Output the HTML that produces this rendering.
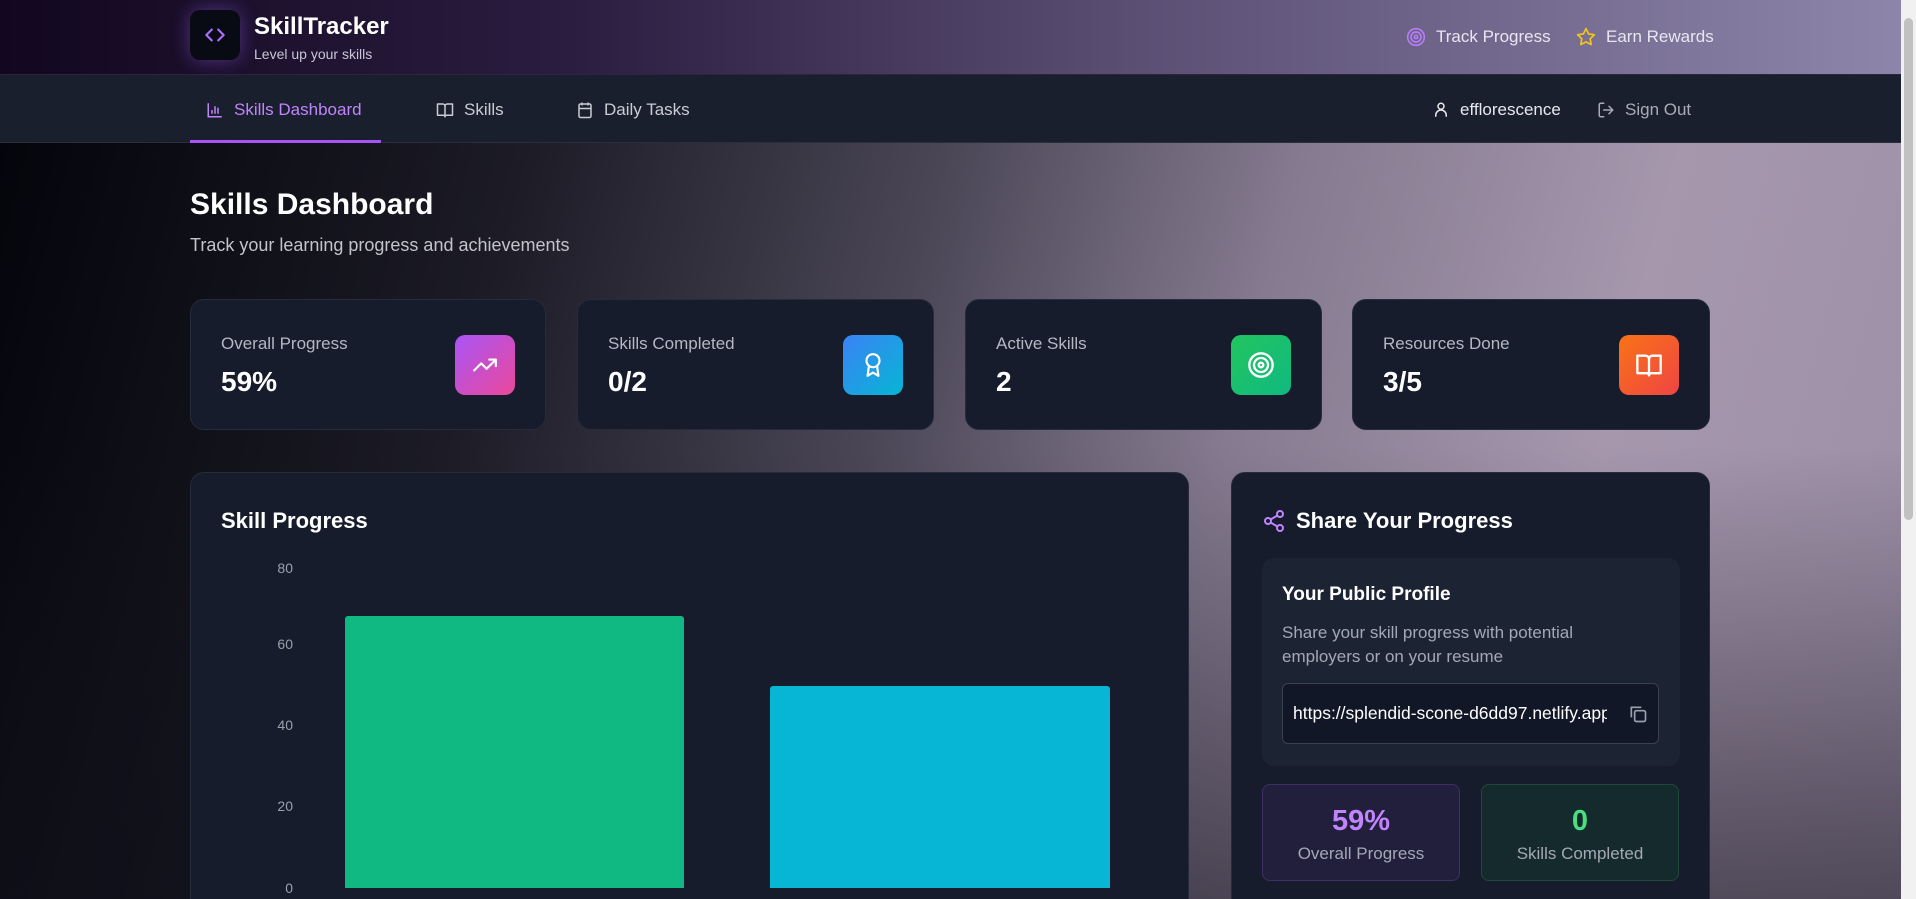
<!DOCTYPE html>
<html style="overflow:hidden;width:1916px;height:899px"><head><meta charset="utf-8"><style>
*{box-sizing:border-box;margin:0;padding:0}
body{width:1916px;height:899px;overflow:hidden;font-family:"Liberation Sans",sans-serif;color:#fff;position:relative;background:#0a0b12}
.bg{position:absolute;left:0;top:143px;width:1901px;height:756px;
background:linear-gradient(180deg,rgba(0,0,0,0) 0%,rgba(0,0,0,0) 40%,rgba(15,15,25,.55) 100%),linear-gradient(105deg,#04050b 0%,#1c1b26 25%,#4a4656 45%,#857a8f 62%,#a697ad 80%,#9c8fa6 100%)}
.hdr{position:absolute;left:0;top:0;width:1901px;height:75px;background:linear-gradient(90deg,#12071f 0%,#2a1d40 30%,#5b4f74 60%,#8d85aa 100%);border-bottom:1px solid #2b2540}
.nav{position:absolute;left:0;top:75px;width:1901px;height:68px;background:#1a1f2d;border-bottom:1px solid #2a2f3c}
.logo{position:absolute;left:190px;top:10px;width:50px;height:50px;border-radius:10px;background:#080a14;box-shadow:0 0 18px rgba(150,90,240,.45);display:flex;align-items:center;justify-content:center}
.abs{position:absolute}
.ni{position:absolute;top:100px;font-size:17px;color:#c9ccd4;display:flex;align-items:center;gap:10px;white-space:nowrap}
.card{position:absolute;background:#161c2b;border:1px solid #262c3b;border-radius:14px}
.lbl{position:absolute;left:30px;top:34px;font-size:17px;color:#b4b8c2}
.val{position:absolute;left:30px;top:66px;font-size:28px;font-weight:bold}
.ib{position:absolute;right:30px;top:35px;width:60px;height:60px;border-radius:10px;display:flex;align-items:center;justify-content:center}
.ax{position:absolute;font-size:14px;color:#9aa0ab;width:40px;text-align:right}
.scroll{position:absolute;right:0;top:0;width:15px;height:899px;background:#f1f1f1}
</style></head><body>
<div class="hdr"></div>
<div class="bg"></div>
<div class="nav"></div>
<div class="logo"><svg width="26" height="26" viewBox="0 0 24 24" fill="none" stroke="#a970f5" stroke-width="2" stroke-linecap="round" stroke-linejoin="round"><path d="M9 7l-5 5 5 5M15 7l5 5-5 5"/></svg></div>
<div class="abs" style="left:254px;top:13px;font-size:24px;font-weight:bold">SkillTracker</div>
<div class="abs" style="left:254px;top:46px;font-size:14px;color:#c8c6d6">Level up your skills</div>
<div class="abs" style="left:1406px;top:27px;font-size:17px;color:#e8e6f0;display:flex;align-items:center;gap:10px"><svg width="20" height="20" viewBox="0 0 24 24" fill="none" stroke="#b67cf7" stroke-width="2"><circle cx="12" cy="12" r="10"/><circle cx="12" cy="12" r="6"/><circle cx="12" cy="12" r="2"/></svg>Track Progress</div>
<div class="abs" style="left:1576px;top:27px;font-size:17px;color:#e8e6f0;display:flex;align-items:center;gap:10px"><svg width="20" height="20" viewBox="0 0 24 24" fill="none" stroke="#f5c518" stroke-width="2" stroke-linejoin="round"><path d="M12 2l3.1 6.3 6.9 1-5 4.9 1.2 6.8L12 17.8 5.8 21l1.2-6.8-5-4.9 6.9-1z"/></svg>Earn Rewards</div>

<div class="ni" style="left:206px;color:#c084fc"><svg width="18" height="18" viewBox="0 0 24 24" fill="none" stroke="#c084fc" stroke-width="2"><path d="M3 3v18h18M8 17v-5M12 17V7M16 17v-8"/></svg>Skills Dashboard</div>
<div class="abs" style="left:190px;top:140px;width:191px;height:3px;background:#a855f7"></div>
<div class="ni" style="left:436px"><svg width="18" height="18" viewBox="0 0 24 24" fill="none" stroke="#c9ccd4" stroke-width="2" stroke-linejoin="round"><path d="M2 4h7a3 3 0 0 1 3 3v14a2 2 0 0 0-2-2H2zM22 4h-7a3 3 0 0 0-3 3v14a2 2 0 0 1 2-2h8z"/></svg>Skills</div>
<div class="ni" style="left:576px"><svg width="18" height="18" viewBox="0 0 24 24" fill="none" stroke="#c9ccd4" stroke-width="2"><rect x="4" y="4" width="16" height="18" rx="2"/><path d="M8 2v4M16 2v4M4 10h16"/></svg>Daily Tasks</div>
<div class="ni" style="left:1432px;color:#e6e8ee"><svg width="18" height="18" viewBox="0 0 24 24" fill="none" stroke="#e6e8ee" stroke-width="2"><circle cx="12" cy="7" r="4"/><path d="M5 21v-2a7 7 0 0 1 14 0v2"/></svg>efflorescence</div>
<div class="ni" style="left:1597px;color:#a8acb6"><svg width="18" height="18" viewBox="0 0 24 24" fill="none" stroke="#a8acb6" stroke-width="2" stroke-linecap="round"><path d="M9 21H5a2 2 0 0 1-2-2V5a2 2 0 0 1 2-2h4M16 17l5-5-5-5M21 12H9"/></svg>Sign Out</div>

<div class="abs" style="left:190px;top:188px;font-size:30px;font-weight:bold">Skills Dashboard</div>
<div class="abs" style="left:190px;top:235px;font-size:18px;color:#c3c3cc">Track your learning progress and achievements</div>

<div class="card" style="left:190px;top:299px;width:356px;height:131px"><div class="lbl">Overall Progress</div><div class="val">59%</div><div class="ib" style="background:linear-gradient(135deg,#a855f7,#ec4899)"><svg width="26" height="26" viewBox="0 0 24 24" fill="none" stroke="#fff" stroke-width="2" stroke-linecap="round" stroke-linejoin="round"><path d="M22 7l-8.5 8.5-5-5L2 17M16 7h6v6"/></svg></div></div>
<div class="card" style="left:577px;top:299px;width:357px;height:131px"><div class="lbl">Skills Completed</div><div class="val">0/2</div><div class="ib" style="background:linear-gradient(135deg,#3b82f6,#06b6d4)"><svg width="26" height="26" viewBox="0 0 24 24" fill="none" stroke="#fff" stroke-width="2" stroke-linejoin="round"><circle cx="12" cy="8" r="6"/><path d="M8.2 13L7 22l5-3 5 3-1.2-9"/></svg></div></div>
<div class="card" style="left:965px;top:299px;width:357px;height:131px"><div class="lbl">Active Skills</div><div class="val">2</div><div class="ib" style="background:linear-gradient(135deg,#22c55e,#10b981)"><svg width="28" height="28" viewBox="0 0 24 24" fill="none" stroke="#fff" stroke-width="2"><circle cx="12" cy="12" r="10"/><circle cx="12" cy="12" r="6"/><circle cx="12" cy="12" r="2"/></svg></div></div>
<div class="card" style="left:1352px;top:299px;width:358px;height:131px"><div class="lbl">Resources Done</div><div class="val">3/5</div><div class="ib" style="background:linear-gradient(135deg,#f97316,#ef4444)"><svg width="28" height="28" viewBox="0 0 24 24" fill="none" stroke="#fff" stroke-width="2" stroke-linejoin="round"><path d="M2 4h7a3 3 0 0 1 3 3v14a2 2 0 0 0-2-2H2zM22 4h-7a3 3 0 0 0-3 3v14a2 2 0 0 1 2-2h8z"/></svg></div></div>

<div class="card" style="left:190px;top:472px;width:999px;height:440px;overflow:hidden">
<div class="abs" style="left:30px;top:35px;font-size:22px;font-weight:bold">Skill Progress</div>
</div>
<div class="ax" style="left:253px;top:560px">80</div>
<div class="ax" style="left:253px;top:636px">60</div>
<div class="ax" style="left:253px;top:717px">40</div>
<div class="ax" style="left:253px;top:798px">20</div>
<div class="ax" style="left:253px;top:880px">0</div>
<div class="abs" style="left:345px;top:616px;width:339px;height:272px;background:#10b981;border-radius:3px 3px 0 0"></div>
<div class="abs" style="left:770px;top:686px;width:340px;height:202px;background:#06b6d4;border-radius:3px 3px 0 0"></div>

<div class="card" style="left:1231px;top:472px;width:479px;height:440px">
<div class="abs" style="left:30px;top:35px;font-size:22px;font-weight:bold;display:flex;align-items:center;gap:10px"><svg width="24" height="24" viewBox="0 0 24 24" fill="none" stroke="#c084fc" stroke-width="2"><circle cx="18" cy="5" r="3"/><circle cx="6" cy="12" r="3"/><circle cx="18" cy="19" r="3"/><path d="M8.6 13.5l6.8 4M15.4 6.5l-6.8 4"/></svg>Share Your Progress</div>
<div class="abs" style="left:30px;top:85px;width:418px;height:208px;background:#1c2333;border-radius:12px">
<div class="abs" style="left:20px;top:26px;font-size:19px;font-weight:bold">Your Public Profile</div>
<div class="abs" style="left:20px;top:63px;font-size:17px;line-height:24px;color:#a3a8b4;width:345px">Share your skill progress with potential employers or on your resume</div>
<div class="abs" style="left:20px;top:125px;width:377px;height:61px;background:#111726;border:1px solid #3a4150;border-radius:6px;overflow:hidden">
<div class="abs" style="left:10px;top:19px;font-size:17.5px;white-space:nowrap;width:314px;overflow:hidden">https://splendid-scone-d6dd97.netlify.app</div>
<svg class="abs" style="left:345px;top:20px" width="20" height="20" viewBox="0 0 24 24" fill="none" stroke="#9aa0ab" stroke-width="2"><rect x="8" y="8" width="13" height="13" rx="2"/><path d="M4 16V4h12"/></svg>
</div></div>
<div class="abs" style="left:30px;top:311px;width:198px;height:97px;background:#221f3c;border:1px solid #3f2f66;border-radius:8px;text-align:center"><div style="margin-top:20px;font-size:29px;font-weight:bold;color:#c084fc">59%</div><div style="margin-top:6px;font-size:17px;color:#a3a8b4">Overall Progress</div></div>
<div class="abs" style="left:249px;top:311px;width:198px;height:97px;background:#152a2c;border:1px solid #1f4a3a;border-radius:8px;text-align:center"><div style="margin-top:20px;font-size:29px;font-weight:bold;color:#4ade80">0</div><div style="margin-top:6px;font-size:17px;color:#a3a8b4">Skills Completed</div></div>
</div>

<div class="scroll"><div class="abs" style="left:3px;top:18px;width:9px;height:502px;background:#c1c1c1;border-radius:5px"></div></div>
</body></html>
